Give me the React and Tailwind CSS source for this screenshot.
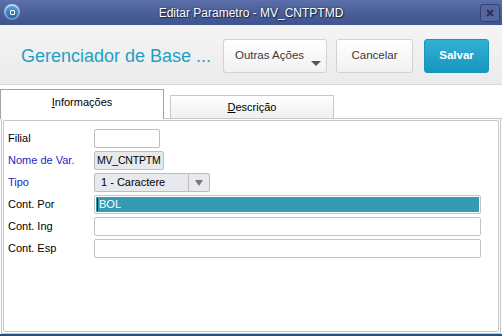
import React from 'react';

const font = { fontFamily: '"Liberation Sans", Arial, sans-serif' };

const Field = ({ label, labelClass = 'text-black', children }) => (
    <div className="flex items-center h-[19px] mb-[3px]">
        <div className={`w-[86px] text-[11px] leading-none ${labelClass}`}>{label}</div>
        {children}
    </div>
);

const App = () => {
    return (
        <div className="w-[502px] h-[336px] flex flex-col overflow-hidden bg-white" style={font}>
            {/* title bar */}
            <div className="relative h-[25px] flex items-center justify-center bg-gradient-to-b from-[#5b70aa] via-[#4b5f98] to-[#3f538c]">
                <div className="absolute left-[4px] top-[4px] w-[16px] h-[16px] rounded-full bg-gradient-to-b from-[#c9d6ea] to-[#6f86b5] flex items-center justify-center">
                    <div className="w-[12px] h-[12px] rounded-full bg-gradient-to-b from-[#4aa5e6] to-[#1c64b0] flex items-center justify-center">
                        <div className="w-[5px] h-[5px] border border-white rounded-[1px]"></div>
                    </div>
                </div>
                <span className="text-white text-[12px] [text-shadow:0_0_2px_#1a2850,1px_1px_1px_#1a2850]">Editar Parametro - MV_CNTPTMD</span>
                <div className="absolute right-[2px] top-[4px] w-[20px] h-[18px] rounded-[3px] border border-[#33416e] bg-[#5467a0] flex items-center justify-center">
                    <svg width="8" height="8" viewBox="0 0 8 8">
                        <path d="M1 1 L7 7 M7 1 L1 7" stroke="#2a3350" strokeWidth="2" />
                    </svg>
                </div>
            </div>
            <div className="h-[3px] bg-[#f3f5f5]"></div>

            {/* header */}
            <div className="h-[57px] flex items-center border-b border-[#d6d6d6] bg-gradient-to-b from-[#f4f4f4] to-[#ebebeb]">
                <div className="pl-[21px] text-[18px] text-[#1ea0c6] leading-none">Gerenciador de Base ...</div>
                <div className="ml-auto flex items-center pr-[13px]">
                    <button className="relative w-[104px] h-[34px] rounded-[3px] border border-[#d2d2d2] bg-gradient-to-b from-white to-[#f1f1f1] text-[11.5px] text-[#3a3a3a] text-left pl-[11px]">
                        Outras Ações
                        <span className="absolute right-[5px] bottom-[6px] w-0 h-0 border-l-[5px] border-r-[5px] border-t-[5px] border-l-transparent border-r-transparent border-t-[#555]"></span>
                    </button>
                    <button className="ml-[9px] w-[77px] h-[34px] rounded-[3px] border border-[#d2d2d2] bg-gradient-to-b from-white to-[#f1f1f1] text-[11.5px] text-[#3a3a3a]">
                        Cancelar
                    </button>
                    <button className="ml-[11px] w-[65px] h-[34px] rounded-[3px] border border-[#1b94ba] bg-gradient-to-b from-[#32b0d4] to-[#1497bf] text-[11.5px] font-bold text-white">
                        Salvar
                    </button>
                </div>
            </div>

            {/* tabs */}
            <div className="mt-[4px] flex items-end h-[30px]">
                <div className="w-[164px] h-[30px] border-l border-t border-r border-[#a3a3a3] bg-white flex items-center justify-center text-[11px] pb-[4px]">
                    <span><span className="underline">I</span>nformações</span>
                </div>
                <div className="w-[6px] h-full border-b border-[#c6c6c6]"></div>
                <div className="w-[164px] h-[24px] border border-[#c6c6c6] bg-gradient-to-b from-white to-[#efefef] flex items-center justify-center text-[11px]">
                    <span><span className="underline">D</span>escrição</span>
                </div>
                <div className="flex-1 h-full border-b border-[#c6c6c6]"></div>
            </div>

            {/* panel */}
            <div className="flex-1 mx-[1px] border border-t-0 border-[#c6c6c6] p-[1px]">
                <div className="h-full border border-[#c6c6c6] rounded-[2px] pl-[4px] pt-[8px]">
                    <Field label="Filial">
                        <div className="w-[66px] h-[19px] border border-[#bdbdbd] rounded-[2px] bg-white"></div>
                    </Field>
                    <Field label="Nome de Var." labelClass="text-[#2323c8]">
                        <div className="w-[70px] h-[19px] border border-[#bdbdbd] rounded-[2px] bg-[#e7e9ed] text-[10.5px] tracking-[-0.2px] pl-[2px] flex items-center overflow-hidden whitespace-nowrap">
                            MV_CNTPTM
                        </div>
                    </Field>
                    <Field label="Tipo" labelClass="text-[#2323c8]">
                        <div className="w-[116px] h-[19px] border border-[#bdbdbd] rounded-[2px] bg-[#e7e9ed] flex items-center text-[11px]">
                            <div className="flex-1 pl-[6px]">1 - Caractere</div>
                            <div className="w-[21px] h-full border-l border-[#bdbdbd] flex items-center justify-center">
                                <span className="w-0 h-0 border-l-[4px] border-r-[4px] border-t-[6px] border-l-transparent border-r-transparent border-t-[#777]"></span>
                            </div>
                        </div>
                    </Field>
                    <Field label="Cont. Por">
                        <div className="w-[387px] h-[19px] border border-[#c4c4c4] rounded-[2px] bg-white p-[1px]">
                            <div className="h-full bg-[#349bb3] flex items-center text-[11px] text-white">
                                <span className="w-[1px] h-[13px] bg-[#1a1a1a] ml-[1px] mr-[1px]"></span>
                                BOL
                            </div>
                        </div>
                    </Field>
                    <Field label="Cont. Ing">
                        <div className="w-[387px] h-[19px] border border-[#c4c4c4] rounded-[2px] bg-white"></div>
                    </Field>
                    <Field label="Cont. Esp">
                        <div className="w-[387px] h-[19px] border border-[#c4c4c4] rounded-[2px] bg-white"></div>
                    </Field>
                </div>
            </div>
            <div className="h-[2px] bg-[#24507e]"></div>
        </div>
    );
};

export default App;
